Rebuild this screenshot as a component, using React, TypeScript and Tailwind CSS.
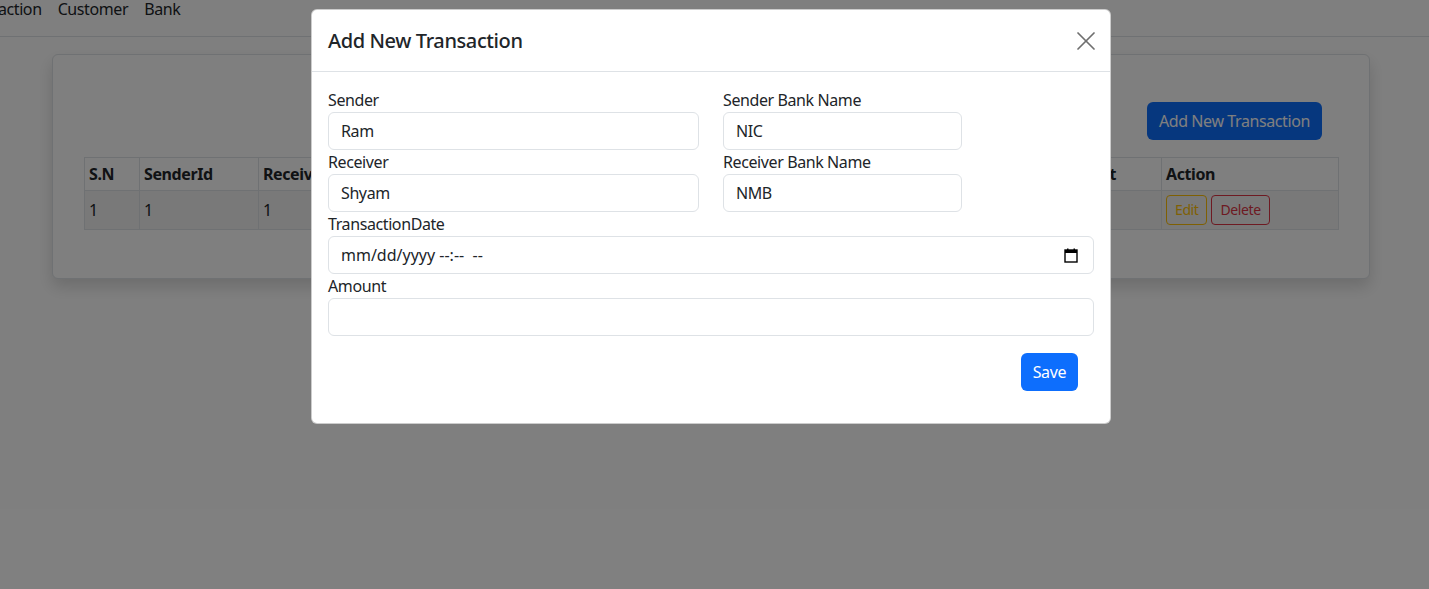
import { X } from 'lucide-react';

const font = { fontFamily: '"Noto Sans", "Open Sans", sans-serif' };

function Field({ label, value, width }: { label: string; value: string; width: string }) {
  return (
    <div className="flex flex-col">
      <label className="text-base leading-6 text-[#212529]">{label}</label>
      <input
        readOnly
        value={value}
        className={`${width} h-[38px] rounded-md border border-[#dee2e6] px-3 text-base tracking-[-0.4px] text-[#212529] outline-none`}
      />
    </div>
  );
}

function CalendarGlyph() {
  return (
    <svg width="14" height="15" viewBox="0 0 14 15" className="text-black">
      <rect x="1" y="2" width="12" height="12" fill="none" stroke="currentColor" strokeWidth="1.4" />
      <rect x="1" y="2" width="12" height="3" fill="currentColor" />
      <rect x="3" y="0.5" width="1.5" height="2" fill="currentColor" />
      <rect x="9.5" y="0.5" width="1.5" height="2" fill="currentColor" />
    </svg>
  );
}

export default function App() {
  return (
    <div
      className="relative h-[589px] w-[1429px] overflow-hidden bg-white tracking-[-0.4px] text-[#212529]"
      style={font}
    >
      {/* navbar */}
      <nav className="flex h-[37px] items-start gap-4 border-b border-[#dee2e6] text-base leading-[18px] text-[#212529]">
        <a className="-ml-[41px]">Transaction</a>
        <a>Customer</a>
        <a>Bank</a>
      </nav>

      {/* page card */}
      <div className="ml-[52px] mt-[17px] w-[1318px] rounded-md border border-[#dee2e6] bg-white px-[31px] pb-8 pt-[31px] shadow-[0_8px_16px_rgba(0,0,0,0.15)]">
        <div className="flex justify-end pr-4 pt-4">
          <button className="h-[38px] rounded-md bg-[#0d6efd] px-3 text-base text-white">Add New Transaction</button>
        </div>
        <table className="mb-4 mt-[17px] w-[1254px] table-fixed border-collapse text-base">
          <colgroup>
            <col className="w-[55px]" />
            <col className="w-[119px]" />
            <col className="w-[180px]" />
            <col className="w-[180px]" />
            <col className="w-[180px]" />
            <col className="w-[251px]" />
            <col className="w-[112px]" />
            <col className="w-[177px]" />
          </colgroup>
          <thead>
            <tr className="h-[33px] text-left font-bold">
              {['S.N', 'SenderId', 'ReceiverId', 'Sender Bank', 'Receiver Bank', 'TransactionDate', 'Amount', 'Action'].map((h) => (
                <th key={h} className="border border-[#dee2e6] px-1 py-1 font-bold">{h}</th>
              ))}
            </tr>
          </thead>
          <tbody>
            <tr className="h-[39px] bg-[#f2f2f2]">
              <td className="border border-[#dee2e6] px-1">1</td>
              <td className="border border-[#dee2e6] px-1">1</td>
              <td className="border border-[#dee2e6] px-1">1</td>
              <td className="border border-[#dee2e6] px-1">NIC</td>
              <td className="border border-[#dee2e6] px-1">NMB</td>
              <td className="border border-[#dee2e6] px-1">2023-01-01</td>
              <td className="border border-[#dee2e6] px-1">500</td>
              <td className="border border-[#dee2e6] px-1">
                <div className="flex gap-1">
                  <button className="h-[30px] rounded border border-[#ffc107] px-2 text-sm text-[#ffc107]">Edit</button>
                  <button className="h-[30px] rounded border border-[#dc3545] px-2 text-sm text-[#dc3545]">Delete</button>
                </div>
              </td>
            </tr>
          </tbody>
        </table>
      </div>

      {/* backdrop */}
      <div className="absolute inset-0 bg-black/50" />

      {/* modal */}
      <div className="absolute left-[311px] top-[9px] w-[800px] rounded-md border border-black/20 bg-white">
        <div className="flex h-[62px] items-center justify-between border-b border-[#dee2e6] pl-4 pr-2">
          <h5 className="text-xl font-medium leading-[30px] text-[#212529]">Add New Transaction</h5>
          <X className="h-8 w-8 text-[#6f6f6f]" strokeWidth={1.3} />
        </div>
        <div className="px-4 pb-8 pt-4">
          <div className="flex gap-6">
            <Field label="Sender" value="Ram" width="w-[371px]" />
            <Field label="Sender Bank Name" value="NIC" width="w-[239px]" />
          </div>
          <div className="flex gap-6">
            <Field label="Receiver" value="Shyam" width="w-[371px]" />
            <Field label="Receiver Bank Name" value="NMB" width="w-[239px]" />
          </div>
          <div className="flex flex-col">
            <label className="text-base leading-6">TransactionDate</label>
            <div className="flex h-[38px] w-full items-center justify-between rounded-md border border-[#dee2e6] pl-3 pr-[15px] text-base text-[#212529]">
              <span className="whitespace-pre tracking-normal">mm/dd/yyyy --:--  --</span>
              <CalendarGlyph />
            </div>
          </div>
          <div className="flex flex-col">
            <label className="text-base leading-6">Amount</label>
            <input className="h-[38px] w-full rounded-md border border-[#dee2e6] px-3 text-base outline-none" />
          </div>
          <div className="flex justify-end pr-4 pt-[17px]">
            <button className="h-[38px] rounded-md bg-[#0d6efd] px-3 text-base text-white">Save</button>
          </div>
        </div>
      </div>
    </div>
  );
}
